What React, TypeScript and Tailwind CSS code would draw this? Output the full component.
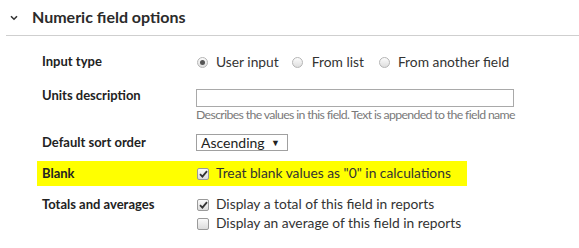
const FONT = "font-['Lato','Noto_Sans',sans-serif]";

function Radio({ checked }: { checked?: boolean }) {
  return (
    <span className="w-[11px] h-[11px] rounded-full border border-[#b5b5b5] bg-gradient-to-b from-[#fcfcfc] to-[#dedede] flex items-center justify-center shrink-0">
      {checked && <span className="w-[5px] h-[5px] rounded-full bg-[#555]" />}
    </span>
  );
}

function Checkbox({ checked }: { checked?: boolean }) {
  return (
    <span className="w-[12px] h-[12px] rounded-[2px] border border-[#9a9a9a] bg-gradient-to-b from-[#fafafa] to-[#dcdcdc] flex items-center justify-center shrink-0">
      {checked && (
        <svg width="9" height="8" viewBox="0 0 9 8">
          <path d="M1 4.2 L3.4 6.6 L8 1.2" fill="none" stroke="#333" strokeWidth="1.8" />
        </svg>
      )}
    </span>
  );
}

export default function App() {
  return (
    <div className={`w-[579px] h-[248px] bg-white ${FONT} text-[#222]`}>
      {/* Header */}
      <div className="ml-[6px] h-[36px] border-b border-[#cfcfcf] flex items-center pl-[4px] pb-[1px]">
        <svg width="8" height="6" viewBox="0 0 8 6" className="mt-[2px]">
          <path d="M1 1.2 L4 4.2 L7 1.2" fill="none" stroke="#333" strokeWidth="1.6" />
        </svg>
        <span className="ml-[14px] text-[16px] font-bold text-[#2b2b2b]">Numeric field options</span>
      </div>

      <div className="ml-[37px] text-[13px]">
        {/* Input type */}
        <div className="mt-[16px] h-[20px] pl-[5px] flex items-center">
          <div className="w-[155px] font-bold">Input type</div>
          <div className="flex items-center text-[13.8px] text-[#333]">
            <Radio checked />
            <span className="ml-[8px]">User input</span>
            <span className="ml-[13px]"><Radio /></span>
            <span className="ml-[9px]">From list</span>
            <span className="ml-[15px]"><Radio /></span>
            <span className="ml-[8px]">From another field</span>
          </div>
        </div>

        {/* Units description */}
        <div className="mt-[14px] pl-[5px] flex items-start">
          <div className="w-[154px] font-bold leading-[18px]">Units description</div>
          <div className="flex flex-col">
            <div className="mt-[3px] w-[318px] h-[18px] border border-[#a9a9a9] bg-white" />
            <div className="leading-[16px] text-[12.3px] tracking-[-0.65px] whitespace-nowrap text-[#7a7a7a]">
              Describes the values in this field. Text is appended to the field name
            </div>
          </div>
        </div>

        {/* Default sort order */}
        <div className="mt-[10px] h-[19px] pl-[5px] flex items-center">
          <div className="w-[154px] font-bold">Default sort order</div>
          <div className="w-[92px] h-[17px] border border-[#a0a0a0] flex items-center justify-between pl-[4px] pr-[7px] text-[14px] text-[#222]">
            <span>Ascending</span>
            <span className="text-[9px]">▼</span>
          </div>
        </div>

        {/* Blank */}
        <div className="mt-[9px] h-[25px] w-[430px] bg-[#ffff00] pl-[5px] flex items-center">
          <div className="w-[155px] font-bold">Blank</div>
          <Checkbox checked />
          <span className="ml-[7px] text-[13.8px] text-[#333]">Treat blank values as "0" in calculations</span>
        </div>

        {/* Totals and averages */}
        <div className="mt-[9px] pl-[5px] flex items-start">
          <div className="w-[155px] font-bold leading-[19px]">Totals and averages</div>
          <div className="flex flex-col text-[13.8px] text-[#333]">
            <div className="h-[19px] flex items-center">
              <Checkbox checked />
              <span className="ml-[7px]">Display a total of this field in reports</span>
            </div>
            <div className="h-[19px] flex items-center">
              <Checkbox />
              <span className="ml-[7px]">Display an average of this field in reports</span>
            </div>
          </div>
        </div>
      </div>
    </div>
  );
}
